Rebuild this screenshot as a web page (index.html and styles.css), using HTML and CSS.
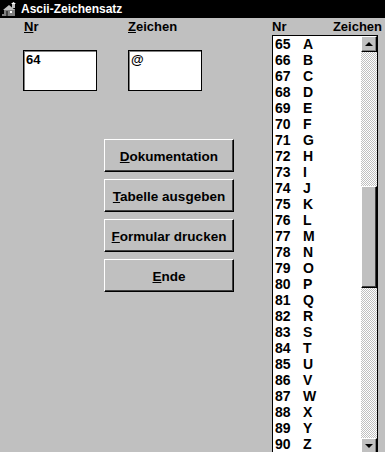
FILE: index.html
```html
<!DOCTYPE html>
<html lang="de">
<head>
  <meta charset="UTF-8" />
  <title>Ascii-Zeichensatz</title>
  <link rel="stylesheet" href="styles.css">
</head>
<body>

<div class="window">
  <!-- Titelzeile -->
  <div class="titlebar">
    <svg class="app-icon" width="16" height="14" viewBox="0 0 16 14">
      <rect x="2" y="7" width="11" height="7" fill="#808080"/>
      <polygon points="1,8 7,3 13,8" fill="#c0c0c0"/>
      <rect x="10" y="1" width="3" height="5" fill="#c0c0c0"/>
      <polygon points="9,2 11.5,0 14,2" fill="#fff"/>
      <rect x="4" y="9" width="2" height="5" fill="#404040"/>
      <rect x="8" y="9" width="2" height="2" fill="#fff"/>
      <rect x="0" y="12" width="3" height="2" fill="#808080"/>
    </svg>
    <span>Ascii-Zeichensatz</span>
  </div>

  <div class="client">
    <div class="form">
      <div class="fields">
        <div class="field nr">
          <label><u>N</u>r</label>
          <div class="edit">64</div>
        </div>
        <div class="field zeichen">
          <label><u>Z</u>eichen</label>
          <div class="edit">@</div>
        </div>
      </div>

      <div class="buttons">
        <button class="btn"><u>D</u>okumentation</button>
        <button class="btn"><u>T</u>abelle ausgeben</button>
        <button class="btn"><u>F</u>ormular drucken</button>
        <button class="btn"><u>E</u>nde</button>
      </div>
    </div>

    <div class="listpane">
      <div class="listhead"><span>Nr</span><span>Zeichen</span></div>
      <div class="listbox">
        <div class="rows" id="rows"></div>
        <div class="scrollbar">
          <div class="sb-btn"><span class="arrow up"></span></div>
          <div class="sb-track">
            <div class="sb-thumb"></div>
          </div>
          <div class="sb-btn"><span class="arrow down"></span></div>
        </div>
      </div>
    </div>
  </div>
</div>

<script>
  // Zeichentabelle 65..90
  const rows = document.getElementById("rows");
  for (let i = 65; i <= 90; i++) {
    const row = document.createElement("div");
    row.className = "row";
    row.innerHTML = "<span class='num'>" + i + "</span><span class='chr'>" + String.fromCharCode(i) + "</span>";
    rows.appendChild(row);
  }
</script>

</body>
</html>
```

FILE: styles.css
```css
* { margin: 0; padding: 0; box-sizing: border-box; }

body {
  font-family: 'Liberation Sans', Arial, sans-serif;
  font-weight: bold;
  font-size: 13px;
  background: #c0c0c0;
  color: #000;
  overflow: hidden;
}

.window {
  width: 385px;
  height: 452px;
  background: #c0c0c0;
  overflow: hidden;
}

.titlebar {
  height: 18px;
  background: #000;
  color: #fff;
  display: flex;
  align-items: center;
  font-size: 12px;
  padding-left: 2px;
}

.app-icon { margin-right: 3px; }

.client {
  display: flex;
}

.form {
  width: 272px;
  padding-left: 23px;
}

.fields {
  display: flex;
  gap: 31px;
}

.field label {
  display: block;
  height: 32px;
  line-height: 16px;
  padding-top: 1px;
}

.nr label { padding-left: 1px; }

.edit {
  width: 74px;
  background: #fff;
  border: 1px solid #000;
  box-shadow: inset 1px 1px #808080;
  height: 41px;
  padding: 1px 0 0 2px;
  line-height: 16px;
}

.buttons {
  display: flex;
  flex-direction: column;
  gap: 7px;
  margin-top: 48px;
  margin-left: 81px;
}

.btn {
  width: 130px;
  height: 33px;
  font: inherit;
  font-size: 13.5px;
  background: #c0c0c0;
  color: #000;
  border: 1px solid;
  border-color: #fff #000 #000 #fff;
  box-shadow: inset -1px -1px #404040;
  padding-top: 1px;
}

.listpane {
  width: 106px;
}

.listhead {
  display: flex;
  justify-content: space-between;
  height: 16px;
  line-height: 16px;
  margin-top: 1px;
  width: 110px;
}

.listbox {
  display: flex;
  height: 420px;
  border: 1px solid #000;
  background: #fff;
}

.rows {
  flex: 1;
  padding: 0 0 0 2px;
  overflow: hidden;
  font-size: 14px;
}

.row {
  display: flex;
  height: 16px;
  line-height: 16px;
}

.num { width: 28px; }

.scrollbar {
  width: 17px;
  display: flex;
  flex-direction: column;
  border-left: 1px solid #fff;
}

.sb-btn {
  height: 16px;
  background: #c0c0c0;
  border: 1px solid;
  border-color: #fff #000 #000 #fff;
  box-shadow: inset -1px -1px #808080;
  display: flex;
  align-items: center;
  justify-content: center;
}

.arrow {
  width: 0;
  height: 0;
  border-left: 4px solid transparent;
  border-right: 4px solid transparent;
}
.arrow.up { border-bottom: 4px solid #000; }
.arrow.down { border-top: 4px solid #000; }

.sb-track {
  flex: 0 0 386px;
  background: repeating-conic-gradient(#c0c0c0 0 25%, #fff 0 50%) 0 0 / 2px 2px;
  padding-top: 134px;
}

.sb-thumb {
  height: 102px;
  background: #c0c0c0;
  border: 1px solid;
  border-color: #fff #000 #000 #fff;
  box-shadow: inset -1px -1px #404040;
}
```
